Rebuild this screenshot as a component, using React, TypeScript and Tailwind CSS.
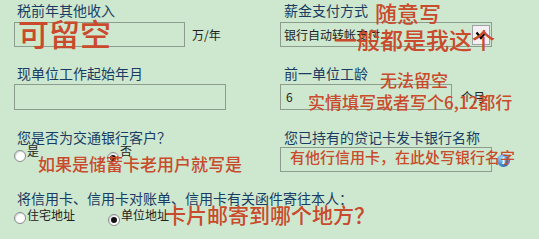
import React from "react";

const FONT = { fontFamily: '"Noto Sans CJK SC", "Microsoft YaHei", sans-serif' };

function Radio({ checked }: { checked?: boolean }) {
  return (
    <span className="inline-flex h-[12px] w-[12px] shrink-0 items-center justify-center rounded-full border border-[#8a8a8a] bg-white shadow-[inset_1px_1px_1px_rgba(0,0,0,0.15)]">
      {checked && <span className="h-[6px] w-[6px] rounded-full bg-[#111]" />}
    </span>
  );
}

export default function App() {
  return (
    <div
      className="relative h-[239px] w-[539px] overflow-hidden bg-[#cde8ce] pl-[14px] text-[#1a3c64]"
      style={FONT}
    >
      {/* Row 1 */}
      <div className="grid grid-cols-[266px_212px] pt-[3px]">
        <div className="flex flex-col">
          <div className="h-[14px] pl-[3px] text-[14px] leading-none">税前年其他收入</div>
          <div className="mt-[5px] flex items-center">
            <div className="h-[25px] w-[171px] border border-[#8e9c8e]" />
            <span className="ml-[7px] text-[12px] leading-none text-[#222]">万/年</span>
          </div>
        </div>
        <div className="flex flex-col">
          <div className="h-[14px] pl-[4px] text-[14px] leading-none">薪金支付方式</div>
          <div className="mt-[5px] flex h-[25px] w-[212px] items-center justify-between border border-[#8e9c8e] pl-[3px] pr-[1px]">
            <span className="text-[12px] leading-none text-[#222]">银行自动转帐支付</span>
            <span className="flex h-[20px] w-[18px] items-center justify-center border border-[#a0a0a8] bg-[#f4f0f4]">
              <svg width="14" height="14" viewBox="0 0 14 14">
                <polyline points="2.5,4.5 7,10 11.5,4.5" fill="none" stroke="#000" strokeWidth="2.2" />
              </svg>
            </span>
          </div>
        </div>
      </div>

      {/* Row 2 */}
      <div className="mt-[19px] grid grid-cols-[266px_212px]">
        <div className="flex flex-col">
          <div className="h-[14px] pl-[3px] text-[14px] leading-none">现单位工作起始年月</div>
          <div className="mt-[4px] h-[26px] w-[212px] border border-[#8e9c8e]" />
        </div>
        <div className="flex flex-col">
          <div className="h-[14px] pl-[4px] text-[14px] leading-none">前一单位工龄</div>
          <div className="mt-[4px] flex items-center">
            <div className="flex h-[26px] w-[172px] items-center border border-[#8e9c8e] pl-[5px]">
              <span className="text-[12px] leading-none text-[#222]">6</span>
            </div>
            <span className="ml-[9px] text-[12px] leading-none text-[#222]">个月</span>
          </div>
        </div>
      </div>

      {/* Row 3 */}
      <div className="mt-[20px] grid grid-cols-[266px_212px]">
        <div className="flex flex-col">
          <div className="h-[14px] pl-[3px] text-[14px] leading-none">您是否为交通银行客户？</div>
          <div className="mt-[1px] flex items-start text-[12px] leading-none text-[#222]">
            <div className="flex w-[93px] items-start">
              <span className="mt-[5px]"><Radio /></span>
              <span className="ml-[1px]">是</span>
            </div>
            <div className="flex items-start">
              <span className="mt-[5px]"><Radio checked /></span>
              <span className="ml-[1px]">否</span>
            </div>
          </div>
        </div>
        <div className="flex flex-col">
          <div className="h-[14px] pl-[4px] text-[14px] leading-none">您已持有的贷记卡发卡银行名称</div>
          <div className="mt-[3px] h-[25px] w-[212px] border border-[#8e9c8e]" />
        </div>
      </div>

      {/* Row 4 */}
      <div className="mt-[19px] flex flex-col">
        <div className="h-[14px] pl-[3px] text-[14px] leading-none">将信用卡、信用卡对账单、信用卡有关函件寄往本人：</div>
        <div className="mt-[4px] flex items-start text-[12px] leading-none text-[#222]">
          <div className="flex w-[94px] items-start">
            <span className="mt-[3px]"><Radio /></span>
            <span className="ml-[1px]">住宅地址</span>
          </div>
          <div className="flex items-start">
            <span className="mt-[3px]"><Radio checked /></span>
            <span className="ml-[1px]">单位地址</span>
          </div>
        </div>
      </div>

      {/* Info icon */}
      <span className="absolute left-[497px] top-[154px] flex h-[13px] w-[13px] items-center justify-center rounded-full bg-[radial-gradient(circle_at_35%_30%,#9fd0ff,#2f74c0_70%)] text-[10px] font-bold leading-none text-white" style={{ fontFamily: '"DejaVu Serif", serif' }}>
        i
      </span>

      {/* Red annotations */}
      <div className="pointer-events-none absolute inset-0 font-medium leading-none text-[#c94a2c]">
        <span className="absolute left-[18px] top-[17px] text-[31px]">可留空</span>
        <span className="absolute left-[375px] top-[1px] text-[22px]">随意写</span>
        <span className="absolute left-[334px] top-[28px] text-[23px]">一般都是我这个</span>
        <span className="absolute left-[380px] top-[71px] text-[17px]">无法留空</span>
        <span className="absolute left-[308px] top-[93px] text-[17px]">实情填写或者写个6,12都行</span>
        <span className="absolute left-[38px] top-[155px] text-[17px]">如果是储蓄卡老用户就写是</span>
        <span className="absolute left-[290px] top-[149px] text-[15px]">有他行信用卡，在此处写银行名字</span>
        <span className="absolute left-[165px] top-[204px] text-[21px]">卡片邮寄到哪个地方？</span>
      </div>
    </div>
  );
}
